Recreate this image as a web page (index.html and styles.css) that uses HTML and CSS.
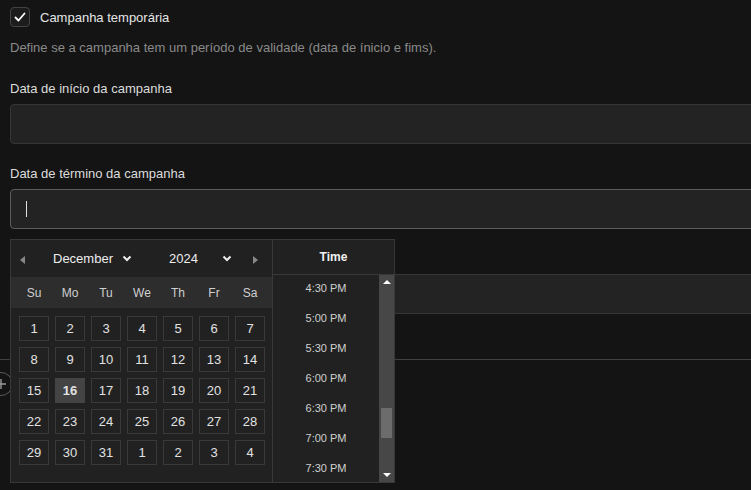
FILE: index.html
```html
<!DOCTYPE html>
<html lang="pt">
<head>
<meta charset="utf-8">
<link rel="stylesheet" href="styles.css">
</head>
<body>
<div class="form">
  <div class="check-row">
    <span class="checkbox"><svg width="14" height="14" viewBox="0 0 14 14"><polyline points="2.5,7.5 5.5,10.5 11.5,3.5" fill="none" stroke="#fff" stroke-width="1.8" stroke-linecap="round" stroke-linejoin="round"/></svg></span>
    <span class="check-label">Campanha temporária</span>
  </div>
  <p class="desc">Define se a campanha tem um período de validade (data de ínicio e fims).</p>

  <div class="field">
    <label class="label">Data de início da campanha</label>
    <div class="input"></div>
  </div>
  <div class="field">
    <label class="label">Data de término da campanha</label>
    <div class="input focused"><span class="caret"></span></div>
  </div>
  <div class="field">
    <label class="label">Horário</label>
    <div class="input"></div>
  </div>
  <div class="divider"></div>
  <div class="add-btn"><svg width="12" height="12" viewBox="0 0 12 12"><path d="M6 1v10M1 6h10" stroke="#999" stroke-width="1.4"/></svg></div>

  <div class="popup">
    <div class="calendar">
      <div class="cal-head">
        <span class="nav prev"></span>
        <span class="sel month">December <svg width="10" height="7" viewBox="0 0 10 7"><polyline points="1.5,1.5 5,5 8.5,1.5" fill="none" stroke="#eee" stroke-width="2"/></svg></span>
        <span class="sel year">2024 <svg width="10" height="7" viewBox="0 0 10 7"><polyline points="1.5,1.5 5,5 8.5,1.5" fill="none" stroke="#eee" stroke-width="2"/></svg></span>
        <span class="nav next"></span>
      </div>
      <div class="dow">
        <span>Su</span><span>Mo</span><span>Tu</span><span>We</span><span>Th</span><span>Fr</span><span>Sa</span>
      </div>
      <div class="days">
        <span>1</span><span>2</span><span>3</span><span>4</span><span>5</span><span>6</span><span>7</span>
        <span>8</span><span>9</span><span>10</span><span>11</span><span>12</span><span>13</span><span>14</span>
        <span>15</span><span class="sel-day">16</span><span>17</span><span>18</span><span>19</span><span>20</span><span>21</span>
        <span>22</span><span>23</span><span>24</span><span>25</span><span>26</span><span>27</span><span>28</span>
        <span>29</span><span>30</span><span>31</span><span>1</span><span>2</span><span>3</span><span>4</span>
      </div>
    </div>
    <div class="time">
      <div class="time-head">Time</div>
      <div class="time-body">
        <ul class="time-list">
          <li>4:30 PM</li><li>5:00 PM</li><li>5:30 PM</li><li>6:00 PM</li><li>6:30 PM</li><li>7:00 PM</li><li>7:30 PM</li>
        </ul>
        <div class="scrollbar">
          <span class="arrow up"></span>
          <span class="thumb"></span>
          <span class="arrow down"></span>
        </div>
      </div>
    </div>
  </div>
</div>
</body>
</html>
```
FILE: styles.css
```css
* { box-sizing: border-box; }
html, body { margin: 0; padding: 0; }
body {
  background: #141414;
  font-family: "Liberation Sans", Arial, sans-serif;
  color: #ddd;
  width: 751px;
  height: 490px;
  overflow: hidden;
}
.form {
  position: relative;
  padding: 7px 0 0 10px;
}
.check-row {
  display: flex;
  align-items: center;
  gap: 10px;
  height: 20px;
}
.checkbox {
  width: 20px;
  height: 20px;
  border: 1px solid #444;
  border-radius: 4px;
  background: #1c1c1c;
  display: flex;
  align-items: center;
  justify-content: center;
}
.check-label {
  font-size: 13px;
  color: #e6e6e6;
}
.desc {
  margin: 13px 0 0;
  font-size: 13px;
  line-height: 16px;
  color: #8a8a8a;
}
.field {
  display: flex;
  flex-direction: column;
  gap: 7px;
  margin-top: 22px;
}
.desc + .field { margin-top: 25px; }
.label {
  font-size: 13px;
  line-height: 16px;
  color: #dcdcdc;
}
.input {
  height: 40px;
  width: 760px;
  background: #232323;
  border: 1px solid #363636;
  border-radius: 4px;
  display: flex;
  align-items: center;
  padding-left: 15px;
}
.input.focused { border-color: #5c5c5c; }
.caret {
  width: 1px;
  height: 16px;
  background: #e0e0e0;
}
.divider {
  margin: 45px 0 0 -10px;
  height: 1px;
  background: #404040;
  width: 761px;
}
.add-btn {
  margin: 12px 0 0 -21px;
  width: 24px;
  height: 24px;
  border: 1px solid #5a5a5a;
  border-radius: 50%;
  display: flex;
  align-items: center;
  justify-content: center;
}
.popup {
  position: absolute;
  left: 10px;
  top: 239px;
  display: flex;
  height: 244px;
  border: 1px solid #383838;
  background: #212121;
}
.calendar {
  width: 262px;
  display: flex;
  flex-direction: column;
  border-right: 1px solid #383838;
}
.cal-head {
  height: 37px;
  background: #212121;
  position: relative;
  display: flex;
  align-items: center;
  font-size: 13px;
  color: #eee;
}
.nav {
  width: 0;
  height: 0;
  border-top: 4px solid transparent;
  border-bottom: 4px solid transparent;
}
.prev { border-right: 5px solid #888; margin-left: 9px; margin-top: 3px; }
.next { border-left: 5px solid #888; margin-left: 21px; margin-top: 3px; }
.sel {
  display: flex;
  align-items: center;
}
.month { margin-left: 28px; gap: 9px; }
.year { margin-left: 37px; gap: 24px; }
.dow {
  height: 31px;
  background: #2d2d2d;
  display: grid;
  grid-template-columns: repeat(7, 30px);
  column-gap: 6px;
  padding-left: 8px;
  align-items: center;
  font-size: 12px;
  color: #cfcfcf;
}
.dow span { text-align: center; }
.days {
  display: grid;
  grid-template-columns: repeat(7, 30px);
  grid-auto-rows: 25px;
  column-gap: 6px;
  row-gap: 6px;
  padding: 8px 0 0 8px;
}
.days span {
  border: 1px solid #3a3a3a;
  background: #212121;
  display: flex;
  align-items: center;
  justify-content: center;
  font-size: 13px;
  color: #e2e2e2;
}
.days .sel-day {
  background: #444;
  border-color: #444;
  font-weight: bold;
}
.time {
  width: 121px;
  display: flex;
  flex-direction: column;
}
.time-head {
  height: 35px;
  border-bottom: 1px solid #383838;
  display: flex;
  align-items: center;
  justify-content: center;
  font-size: 12px;
  font-weight: bold;
  color: #f0f0f0;
}
.time-body {
  flex: 1;
  display: flex;
  overflow: hidden;
}
.time-list {
  list-style: none;
  margin: -2px 0 0;
  padding: 0;
  flex: 1;
}
.time-list li {
  height: 30px;
  display: flex;
  align-items: center;
  justify-content: center;
  font-size: 11px;
  color: #cfcfcf;
}
.scrollbar {
  width: 15px;
  background: #474747;
  position: relative;
}
.arrow {
  position: absolute;
  left: 4px;
  width: 0;
  height: 0;
  border-left: 4px solid transparent;
  border-right: 4px solid transparent;
}
.arrow.up { top: 5px; border-bottom: 4px solid #fff; }
.arrow.down { bottom: 5px; border-top: 4px solid #fff; }
.thumb {
  position: absolute;
  left: 2px;
  top: 133px;
  width: 11px;
  height: 30px;
  background: #6c6c6c;
}
```
